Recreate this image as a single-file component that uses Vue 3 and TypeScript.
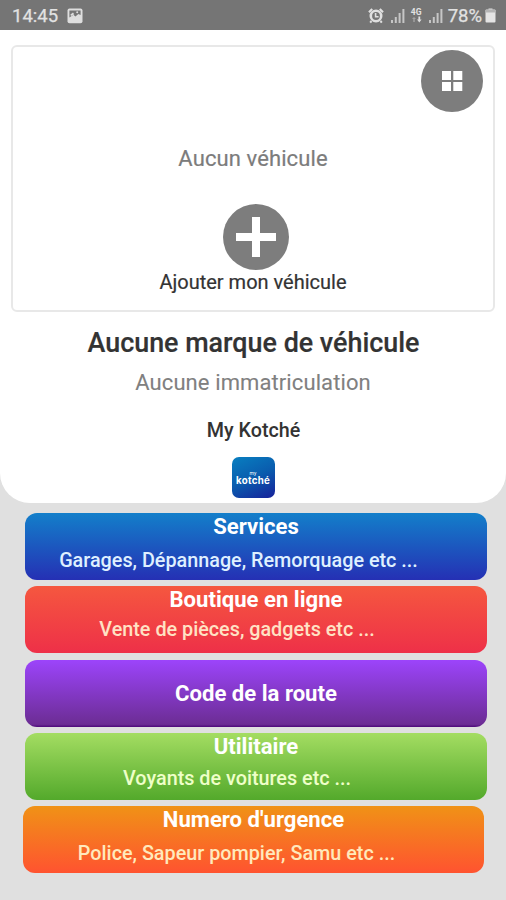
<script setup lang="ts">
interface MenuItem {
  id: string
  title: string
  subtitle?: string
}

const items: MenuItem[] = [
  { id: 'services', title: 'Services', subtitle: 'Garages, Dépannage, Remorquage etc ...' },
  { id: 'shop', title: 'Boutique en ligne', subtitle: 'Vente de pièces, gadgets etc ...' },
  { id: 'code', title: 'Code de la route' },
  { id: 'utility', title: 'Utilitaire', subtitle: 'Voyants de voitures etc ...' },
  { id: 'emergency', title: "Numero d'urgence", subtitle: 'Police, Sapeur pompier, Samu etc ...' },
]
</script>

<template>
  <div class="screen">
    <header class="status">
      <span class="time">14:45</span>
      <svg class="picture" width="16" height="16" viewBox="0 0 16 16">
        <rect x="0.5" y="0.6" width="15" height="14.6" rx="2" fill="#dedede" />
        <path d="M2.4 2.4h11.2v4.6l-2.2-1-3 2.4-2-1.6-4 2.8z" fill="#757575" />
        <path d="M3.4 6.6l2.6-2 1.2 1.6L4 8z" fill="#dedede" />
        <circle cx="10.2" cy="4.2" r="1" fill="#dedede" />
      </svg>
      <span class="spacer"></span>
      <svg class="alarm" width="16" height="16" viewBox="0 0 16 16">
        <path d="M1 4.2L4.2 1M15 4.2L11.8 1" stroke="#e0e0e0" stroke-width="2.2" />
        <path d="M3.5 13L2.2 14.6M12.5 13l1.3 1.6" stroke="#e0e0e0" stroke-width="2" />
        <circle cx="8" cy="8" r="5.2" fill="#757575" stroke="#e0e0e0" stroke-width="2.6" />
        <path d="M7.6 5v3.7h3" fill="none" stroke="#e0e0e0" stroke-width="1.6" />
      </svg>
      <svg class="signal" width="15" height="15" viewBox="0 0 15 15">
        <path d="M1 12h2v3H1zM4.8 9h2v6h-2zM8.6 5h2v10h-2zM12.4 1h2v14h-2z" fill="#c6c6c6" />
      </svg>
      <div class="network">
        <span>4G</span>
        <svg width="11" height="7" viewBox="0 0 11 7">
          <path d="M1 3l2-2 2 2zM2.3 3h1.4v3H2.3z" fill="#a4a4a4" />
          <path d="M6 3.5h4.6L8.3 6.5zM7.4 0.5h1.8v3.5H7.4z" fill="#dedede" />
        </svg>
      </div>
      <svg class="signal second" width="15" height="15" viewBox="0 0 15 15">
        <path d="M1 12h2v3H1zM4.8 9h2v6h-2zM8.6 5h2v10h-2zM12.4 1h2v14h-2z" fill="#c6c6c6" />
      </svg>
      <span class="percent">78%</span>
      <svg class="battery" width="11" height="15" viewBox="0 0 11 15">
        <path d="M3.5 0h4v2h-4z" fill="#aaa" />
        <rect x="0.5" y="1.5" width="10" height="13" rx="1" fill="#e4e4e4" />
        <path d="M0.5 2h10v2.5H0.5z" fill="#b4b4b4" />
      </svg>
    </header>

    <section class="panel">
      <div class="vehicle">
        <button class="grid-button" aria-label="Menu">
          <svg width="22" height="22" viewBox="0 0 22 22">
            <path d="M1 1h9v9H1zM12.3 1h9v9h-9zM1 12h9v9H1zM12.3 12h9v9h-9z" fill="#fff" />
          </svg>
        </button>
        <p class="empty">Aucun véhicule</p>
        <button class="add-button" aria-label="Ajouter">
          <svg width="40" height="40" viewBox="0 0 40 40">
            <path d="M16 0h8v16h16v8H24v16h-8V24H0v-8h16z" fill="#fff" />
          </svg>
        </button>
        <p class="add-label">Ajouter mon véhicule</p>
      </div>
      <h1 class="brand">Aucune marque de véhicule</h1>
      <p class="plate">Aucune immatriculation</p>
      <p class="app-name">My Kotché</p>
      <div class="logo">
        <span class="logo-my">my</span>
        <span class="logo-name">kotché</span>
      </div>
    </section>

    <nav class="menu">
      <div v-for="item in items" :key="item.id" class="item" :class="item.id">
        <span class="title">{{ item.title }}</span>
        <span v-if="item.subtitle" class="subtitle">{{ item.subtitle }}</span>
      </div>
    </nav>
  </div>
</template>

<style>
body {
  margin: 0;
  background: #e0e0e0;
}
</style>

<style scoped>
.screen {
  width: 506px;
  height: 900px;
  overflow: hidden;
  background: #e0e0e0;
  font-family: Roboto, "Liberation Sans", sans-serif;
}
p, h1 {
  margin: 0;
  white-space: nowrap;
}
button {
  border: 0;
  padding: 0;
  display: flex;
  align-items: center;
  justify-content: center;
  border-radius: 50%;
  background: #7d7d7d;
}
.status {
  height: 30px;
  box-sizing: border-box;
  padding: 1px 10px 0 12px;
  display: flex;
  align-items: center;
  background: #757575;
  color: #e2e2e2;
}
.time {
  font-size: 18.5px;
  line-height: 30px;
  width: 55px;
  -webkit-text-stroke: 0.25px #e2e2e2;
}
.spacer {
  flex: 1;
}
.signal {
  margin-left: 6px;
}
.network {
  width: 13px;
  margin-left: 5px;
  display: flex;
  flex-direction: column;
  align-items: center;
  font-size: 8.5px;
  font-weight: 700;
  line-height: 8px;
}
.signal.second {
  margin-left: 5px;
}
.percent {
  margin-left: 5px;
  font-size: 18.5px;
  -webkit-text-stroke: 0.25px #e2e2e2;
}
.battery {
  margin-left: 3px;
}
.picture, .alarm, .signal, .network, .battery {
  flex: none;
}
.panel {
  height: 473px;
  box-sizing: border-box;
  padding-top: 15px;
  display: flex;
  flex-direction: column;
  align-items: center;
  background: #fff;
  border-radius: 0 0 30px 30px;
}
.vehicle {
  position: relative;
  width: 484px;
  height: 267px;
  flex: none;
  box-sizing: border-box;
  padding-top: 99px;
  display: flex;
  flex-direction: column;
  align-items: center;
  border: 2px solid #e8e8e8;
  border-radius: 6px;
}
.grid-button {
  position: absolute;
  top: 3px;
  right: 10px;
  width: 62px;
  height: 62px;
}
.empty {
  height: 26px;
  line-height: 26px;
  font-size: 22px;
  letter-spacing: 0.1px;
  color: #7c7c7c;
  -webkit-text-stroke: 0.2px #7c7c7c;
}
.add-button {
  flex: none;
  width: 66px;
  height: 66px;
  margin-top: 32px;
  margin-left: 5px;
}
.add-label {
  line-height: 26px;
  margin-top: -1px;
  font-size: 20px;
  color: #333;
  -webkit-text-stroke: 0.2px #333;
}
.brand {
  margin-top: 14px;
  margin-left: 1px;
  line-height: 34px;
  font-size: 26.9px;
  font-weight: 500;
  color: #333;
  -webkit-text-stroke: 0.2px #333;
}
.plate {
  margin-top: 10px;
  line-height: 26px;
  font-size: 22px;
  letter-spacing: 0.1px;
  color: #808080;
  -webkit-text-stroke: 0.1px #808080;
}
.app-name {
  margin-top: 22px;
  margin-left: 1px;
  line-height: 26px;
  font-size: 19.7px;
  font-weight: 500;
  color: #333;
}
.logo {
  width: 43px;
  height: 41px;
  margin-top: 13px;
  flex: none;
  display: flex;
  flex-direction: column;
  align-items: center;
  border-radius: 7px;
  background: linear-gradient(155deg, #087fc0 0%, #0a5cae 50%, #17209a 100%);
  color: #fff;
}
.logo-my {
  height: 6px;
  margin-top: 13px;
  font-size: 5px;
  line-height: 6px;
}
.logo-name {
  font-family: Inter, sans-serif;
  font-size: 9.7px;
  font-weight: 700;
  line-height: 9px;
  letter-spacing: 0.3px;
}
.menu {
  padding: 10px 19px 0 25px;
  display: grid;
  grid-auto-rows: 67px;
  row-gap: 6.3px;
}
.item {
  display: flex;
  flex-direction: column;
  align-items: center;
  border-radius: 12px;
}
.title {
  height: 27px;
  line-height: 26px;
  font-size: 22.1px;
  font-weight: 700;
  color: #fff;
}
.subtitle {
  margin-top: 8px;
  padding-right: 36px;
  line-height: 26px;
  font-size: 19.8px;
  font-weight: 500;
  white-space: nowrap;
}
.services {
  background: linear-gradient(#137fca, #2530b4);
}
.services .subtitle {
  padding-right: 35px;
  color: #dff0ff;
}
.shop {
  background: linear-gradient(#f5573f, #ee3048);
}
.shop .subtitle {
  margin-top: 4px;
  padding-right: 38px;
  color: #ffe2c4;
}
.code {
  justify-content: center;
  background: linear-gradient(#9c44fb, #6c2d94 96%, #4d087a);
}
.utility {
  background: linear-gradient(#a4dd62, #53a92b);
}
.utility .subtitle {
  margin-top: 6px;
  padding-right: 38px;
  color: #eeffc8;
}
.emergency {
  margin: 0 3px 0 -2px;
  background: linear-gradient(#f09216, #ff5330);
}
.emergency .subtitle {
  padding-right: 34px;
  color: #ffe9bc;
}
</style>
